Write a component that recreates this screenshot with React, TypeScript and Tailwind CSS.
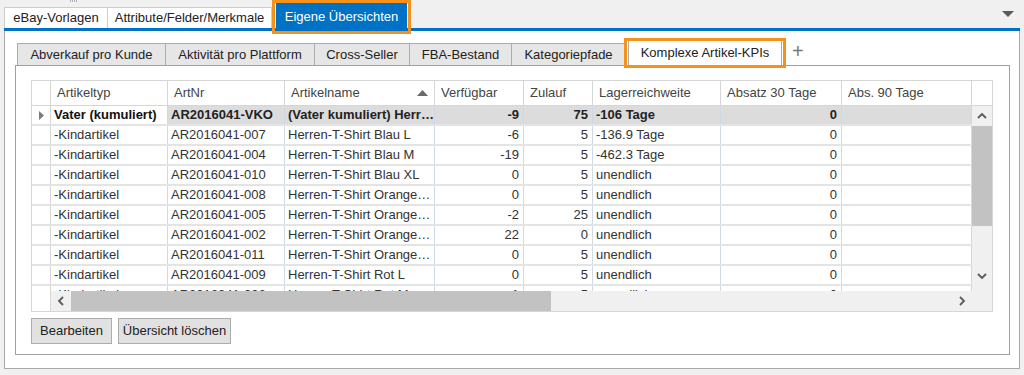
import React from "react";

const cols = [
  { name: "Artikeltyp", w: 117, align: "left" },
  { name: "ArtNr", w: 117, align: "left" },
  { name: "Artikelname", w: 150, align: "left", sort: true },
  { name: "Verfügbar", w: 89, align: "right" },
  { name: "Zulauf", w: 69, align: "right" },
  { name: "Lagerreichweite", w: 128, align: "left" },
  { name: "Absatz 30 Tage", w: 121, align: "right" },
  { name: "Abs. 90 Tage", w: 130, align: "right" },
];

const rows: string[][] = [
  ["Vater (kumuliert)", "AR2016041-VKO", "(Vater kumuliert) Herr…", "-9", "75", "-106 Tage", "0", ""],
  ["-Kindartikel", "AR2016041-007", "Herren-T-Shirt Blau L", "-6", "5", "-136.9 Tage", "0", ""],
  ["-Kindartikel", "AR2016041-004", "Herren-T-Shirt Blau M", "-19", "5", "-462.3 Tage", "0", ""],
  ["-Kindartikel", "AR2016041-010", "Herren-T-Shirt Blau XL", "0", "5", "unendlich", "0", ""],
  ["-Kindartikel", "AR2016041-008", "Herren-T-Shirt Orange…", "0", "5", "unendlich", "0", ""],
  ["-Kindartikel", "AR2016041-005", "Herren-T-Shirt Orange…", "-2", "25", "unendlich", "0", ""],
  ["-Kindartikel", "AR2016041-002", "Herren-T-Shirt Orange…", "22", "0", "unendlich", "0", ""],
  ["-Kindartikel", "AR2016041-011", "Herren-T-Shirt Orange…", "0", "5", "unendlich", "0", ""],
  ["-Kindartikel", "AR2016041-009", "Herren-T-Shirt Rot L", "0", "5", "unendlich", "0", ""],
  ["-Kindartikel", "AR2016041-006", "Herren-T-Shirt Rot M", "1", "5", "unendlich", "0", ""],
];

const innerTabs = [
  { label: "Abverkauf pro Kunde", w: 149 },
  { label: "Aktivität pro Plattform", w: 149 },
  { label: "Cross-Seller", w: 95 },
  { label: "FBA-Bestand", w: 102 },
  { label: "Kategoriepfade", w: 114 },
];

function Chevron({ dir }: { dir: "up" | "down" | "left" | "right" }) {
  const pts: Record<string, string> = {
    up: "1,6 5,2 9,6",
    down: "1,2 5,6 9,2",
    left: "6,1 2,5 6,9",
    right: "2,1 6,5 2,9",
  };
  const vert = dir === "up" || dir === "down";
  return (
    <svg width={vert ? 10 : 8} height={vert ? 8 : 10} viewBox={vert ? "0 0 10 8" : "0 0 8 10"}>
      <polyline points={pts[dir]} fill="none" stroke="#5a5a5a" strokeWidth="1.8" />
    </svg>
  );
}

export default function App() {
  return (
    <div className="w-[1024px] h-[375px] bg-[#f0f0f0] font-['Liberation_Sans',Arial,sans-serif] text-[13px] text-[#333] relative overflow-hidden">
      {/* grip dots */}
      <div className="absolute left-[70px] top-0 flex gap-[1px]">
        <div className="w-[1px] h-[2px] bg-[#b0b0b0]" />
        <div className="w-[1px] h-[2px] bg-[#b0b0b0]" />
        <div className="w-[1px] h-[2px] bg-[#b0b0b0]" />
        <div className="w-[1px] h-[2px] bg-[#b0b0b0]" />
      </div>
      <div className="pl-[4px] pr-[4px]">
        {/* top tabs */}
        <div className="flex items-end h-[28px]">
          <div className="h-[21px] w-[104px] bg-white border border-[#cccccc] border-b-0 flex items-center justify-center text-[#222]">
            eBay-Vorlagen
          </div>
          <div className="h-[21px] w-[164px] bg-white border border-[#cccccc] border-b-0 border-l-0 flex items-center justify-center text-[#222]">
            Attribute/Felder/Merkmale
          </div>
          <div className="relative ml-[4px] h-[28px] w-[131px] bg-[#0072c6] text-white flex items-center justify-center pt-[6px]">
            Eigene Übersichten
            <div className="absolute left-[-4px] right-[-4px] top-0 bottom-[-6px] border-[3px] border-[#f5921e] z-10" />
          </div>
          <div className="flex-1" />
          <svg width="12" height="7" viewBox="0 0 12 7" className="mb-[10px] mr-[6px]">
            <polygon points="0,0 12,0 6,6" fill="#5a5a5a" />
          </svg>
        </div>
        <div className="h-[3px] bg-[#0072c6]" />
        {/* outer panel */}
        <div className="h-[338px] bg-white border border-t-0 border-[#a8a8a8] pl-[10px] pr-[9px]">
          {/* inner tabs */}
          <div className="flex items-end h-[34px] pl-[2px]">
            {innerTabs.map((t) => (
              <div
                key={t.label}
                style={{ width: t.w }}
                className="h-[22px] bg-[#e6e6e6] border border-[#acacac] border-b-0 border-l-0 first:border-l flex items-center justify-center text-[#222]"
              >
                {t.label}
              </div>
            ))}
            <div className="relative ml-[2px] h-[25px] w-[154px] bg-white border border-[#acacac] border-b-0 flex items-center justify-center text-[#222]">
              Komplexe Artikel-KPIs
              <div className="absolute left-[-5px] right-[-5px] top-[-3px] bottom-[-3px] border-[3px] border-[#f5921e] z-10" />
            </div>
            <div className="ml-[10px] mb-[4px] text-[20px] leading-none text-[#777] font-light">+</div>
          </div>
          {/* inner panel */}
          <div className="h-[290px] border border-[#a0a0a0] pl-[15px] pt-[14px]">
            {/* grid */}
            <div className="w-[962px] h-[232px] border border-[#d6d6d6] flex flex-col">
              <div className="flex h-[210px]">
                <div className="w-[940px] h-[210px] overflow-hidden">
                  {/* header */}
                  <div className="flex h-[25px] border-b border-[#d6d6d6] bg-white">
                    <div className="w-[19px] border-r border-[#d6d6d6]" />
                    {cols.map((c) => (
                      <div
                        key={c.name}
                        style={{ width: c.w }}
                        className="shrink-0 border-r border-[#d6d6d6] pl-[6px] pr-[6px] flex items-center justify-between text-[#444]"
                      >
                        <span>{c.name}</span>
                        {c.sort && (
                          <svg width="11" height="7" viewBox="0 0 11 7">
                            <polygon points="0,6 11,6 5.5,0" fill="#6a6a6a" />
                          </svg>
                        )}
                      </div>
                    ))}
                  </div>
                  {rows.map((r, i) => (
                    <div key={i} className="flex h-[20px] border-b-2 border-[#e4e4e4]">
                      <div className="w-[19px] shrink-0 border-r border-[#d6d6d6] bg-white flex items-center justify-center">
                        {i === 0 && (
                          <svg width="5" height="9" viewBox="0 0 5 9">
                            <polygon points="0,0 5,4.5 0,9" fill="#7a7a7a" />
                          </svg>
                        )}
                      </div>
                      {cols.map((c, j) => (
                        <div
                          key={j}
                          style={{ width: c.w }}
                          className={
                            "shrink-0 border-r border-[#cfd9e6] flex items-center whitespace-nowrap overflow-hidden " +
                            (c.align === "right" ? "justify-end pr-[4px] " : "pl-[3px] ") +
                            (i === 0
                              ? j === 0
                                ? "bg-white font-bold text-[#111] "
                                : "bg-[#dcdcdc] font-bold text-[#222] "
                              : "bg-white text-[#333] ")
                          }
                        >
                          {r[j]}
                        </div>
                      ))}
                    </div>
                  ))}
                </div>
                {/* vertical scrollbar */}
                <div className="w-[20px] flex flex-col">
                  <div className="h-[25px] border-b border-[#d6d6d6] bg-white" />
                  <div className="flex-1 bg-[#f0f0f0] flex flex-col">
                    <div className="h-[20px] flex items-center justify-center">
                      <Chevron dir="up" />
                    </div>
                    <div className="h-[100px] bg-[#c2c2c2]" />
                    <div className="flex-1" />
                    <div className="h-[24px] flex items-center justify-center pb-[6px]">
                      <Chevron dir="down" />
                    </div>
                  </div>
                </div>
              </div>
              {/* horizontal scrollbar */}
              <div className="flex h-[20px]">
                <div className="w-[19px] bg-white border-r border-[#d6d6d6]" />
                <div className="flex-1 bg-[#f0f0f0] flex items-stretch">
                  <div className="w-[20px] flex items-center justify-center">
                    <Chevron dir="left" />
                  </div>
                  <div className="w-[480px] bg-[#c2c2c2]" />
                  <div className="flex-1" />
                  <div className="w-[20px] flex items-center justify-center mr-[20px]">
                    <Chevron dir="right" />
                  </div>
                </div>
              </div>
            </div>
            {/* buttons */}
            <div className="flex gap-[6px] mt-[6px]">
              <button className="h-[26px] w-[81px] bg-[#e1e1e1] border border-[#adadad] text-[#222] text-[13px]">
                Bearbeiten
              </button>
              <button className="h-[26px] w-[113px] bg-[#e1e1e1] border border-[#adadad] text-[#222] text-[13px]">
                Übersicht löschen
              </button>
            </div>
          </div>
        </div>
      </div>
    </div>
  );
}
